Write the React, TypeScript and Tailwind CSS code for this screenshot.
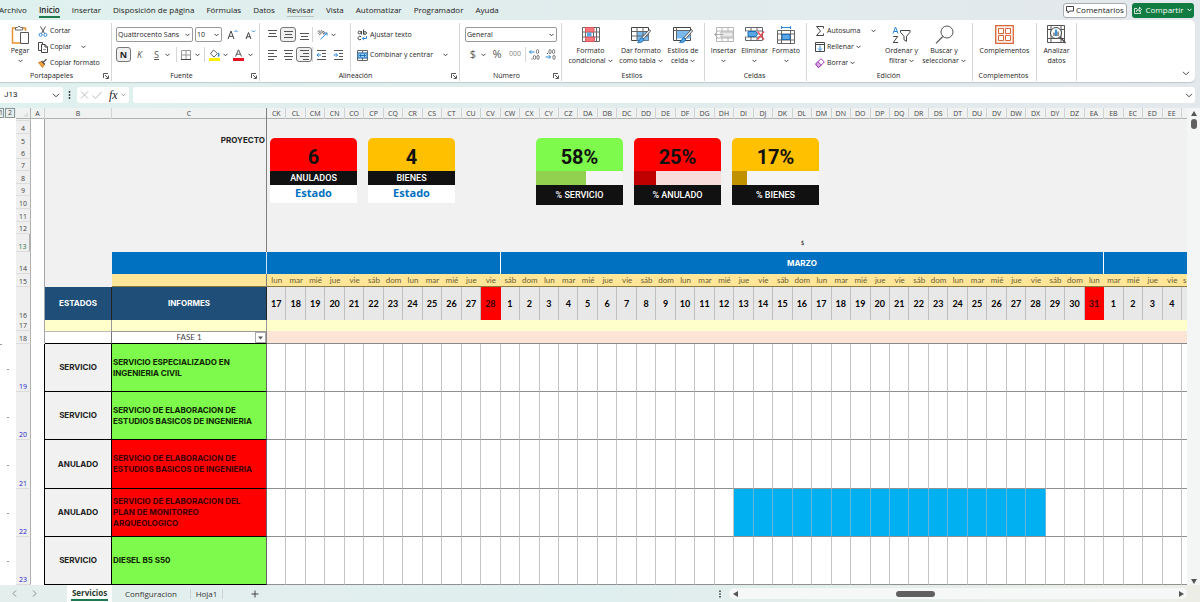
import React from "react";

const COLS =
  "grid grid-cols-[15px_14px_67px_155px_repeat(47,minmax(0,1fr))_5px]";

const WEEK = ["lun", "mar", "mié", "jue", "vie", "sáb", "dom"];

function columnName(index: number) {
  const first = String.fromCharCode(65 + Math.floor(index / 26) - 1);
  return first + String.fromCharCode(65 + (index % 26));
}

const DAYS = Array.from({ length: 47 }, (_, i) => ({
  column: columnName(88 + i),
  weekday: WEEK[i % 7],
  number: i < 12 ? 17 + i : i < 43 ? i - 11 : i - 42,
  monthEnd: i === 11 || i === 42,
}));

type Task = {
  row: number;
  state: string;
  name: string;
  cancelled?: boolean;
  from?: number;
  to?: number;
};

const TASKS: Task[] = [
  { row: 19, state: "SERVICIO", name: "SERVICIO ESPECIALIZADO EN INGENIERIA CIVIL" },
  { row: 20, state: "SERVICIO", name: "SERVICIO DE ELABORACION DE ESTUDIOS BASICOS DE INGENIERIA" },
  { row: 21, state: "ANULADO", name: "SERVICIO DE ELABORACION DE ESTUDIOS BASICOS DE INGENIERIA", cancelled: true },
  { row: 22, state: "ANULADO", name: "SERVICIO DE ELABORACION DEL PLAN DE MONITOREO ARQUEOLOGICO", cancelled: true, from: 24, to: 39 },
  { row: 23, state: "SERVICIO", name: "DIESEL B5 S50" },
];

/* ---------- icons ---------- */

type IconProps = { w?: number; h?: number; box?: string; className?: string; children: React.ReactNode };

function Icon({ w = 14, h = 14, box, className = "", children }: IconProps) {
  return (
    <svg
      width={w}
      height={h}
      viewBox={box ?? `0 0 ${w} ${h}`}
      fill="none"
      stroke="#444"
      strokeWidth="1"
      className={`shrink-0 ${className}`}
      aria-hidden="true"
    >
      {children}
    </svg>
  );
}

function Chevron({ className = "text-[#444]" }: { className?: string }) {
  return (
    <svg width="5" height="4" viewBox="0 0 5 4" fill="none" stroke="currentColor" strokeWidth="1" className={`inline-block shrink-0 ${className}`} aria-hidden="true">
      <path d="M0.5 0.8 2.5 2.8 4.5 0.8" />
    </svg>
  );
}

const WideChevron = () => (
  <Icon w={8} h={5}>
    <path d="M1 0.8 4 3.8 7 0.8" />
  </Icon>
);

const PasteIcon = () => (
  <Icon w={20} h={20}>
    <path d="M5 3H2.5v15H10M13 3h2.5v3" stroke="#e8912d" strokeWidth="1.5" />
    <path d="M5.500 5V2.500h2a1.700 1.700 0 0 1 3.200 0h2V5z" stroke="#666" fill="#fff" />
    <path d="M10.500 7.500h8v11h-8z" stroke="#555" fill="#fff" />
  </Icon>
);
const CutIcon = () => (
  <Icon w={10} h={11}>
    <path d="M2.500 0.500 6.500 7.500M7.500 0.500 3.500 7.500" stroke="#555" />
    <circle cx="2.600" cy="8.800" r="1.500" stroke="#2b88d8" />
    <circle cx="7.400" cy="8.800" r="1.500" stroke="#2b88d8" />
  </Icon>
);
const CopyIcon = () => (
  <Icon w={10} h={11}>
    <path d="M3.500 8.500h-3v-8h4v2" />
    <path d="M3.500 2.500h3.500l2.500 2.500v5.500h-6zM7 2.500v2.500h2.500" />
    <path d="M5 7.500h3" stroke="#999" />
  </Icon>
);
const BrushIcon = () => (
  <Icon w={10} h={10}>
    <path d="M0.500 4.500 4 3.500 6.500 6.500 4.500 9.500z" fill="#f2a33c" stroke="#d9822b" />
    <path d="M3.500 3 7 6.500M5 4.500 8.500 1" stroke="#555" strokeWidth="1.300" />
  </Icon>
);
const LauncherIcon = () => (
  <Icon w={6} h={6}>
    <path d="M0.500 5V0.500H5M2 2l3 3M5.500 2.500v3h-3" stroke="#555" />
  </Icon>
);
const BordersIcon = () => (
  <Icon w={10} h={10}>
    <path d="M0.500 0.500h9v9h-9zM5 0.500v9M0.500 5h9" stroke="#999" />
    <path d="M0 9.500h10" stroke="#444" />
  </Icon>
);
const BucketIcon = () => (
  <Icon w={11} h={12}>
    <path d="M4.500 1 8.500 4.500 5 8 1.500 4.800z" stroke="#666" />
    <path d="M9 4c1 1.200 1 2.500 0.300 3.500" stroke="#2b88d8" strokeWidth="1.500" />
    <path d="M0 10.500h11" stroke="#fff000" strokeWidth="3" />
  </Icon>
);
const FontColorIcon = () => (
  <Icon w={11} h={12}>
    <path d="M2.500 7.500 5.500 0.800 8.500 7.500M3.600 5.200h3.800" stroke="#555" />
    <path d="M0 10.500h11" stroke="#e81123" strokeWidth="3" />
  </Icon>
);

function Lines({ rows }: { rows: [number, number, number][] }) {
  return (
    <Icon w={11} h={11}>
      {rows.map(([x, y, len]) => (
        <path key={y} d={`M${x} ${y}h${len}`} stroke="#555" />
      ))}
    </Icon>
  );
}

const OrientationIcon = () => (
  <Icon w={11} h={11}>
    <path d="M0.800 3.200c0.200-1.500 2-1.700 2.600-0.600l1.200 1.700M2.800 3.300c-1.300 0.300-1.500 1.800-0.500 2.200s1.900-0.700 1.500-1.700M4 1l3 4.200M5.300 3c0.800-1 2.400-0.600 2.300 0.700s-1.200 1.500-1.700 1" stroke="#666" strokeWidth="0.900" />
    <path d="M3.500 10.200 10 4M7.500 4H10v2.500" stroke="#2b88d8" />
  </Icon>
);
const IndentIcon = ({ flip = false }: { flip?: boolean }) => (
  <Icon w={11} h={11}>
    <path d="M1 1.500h9M6 4.500h4M6 7.500h4M1 10.500h9" stroke="#555" />
    <path d={flip ? "M0.500 6h4M2.800 4.200 4.600 6 2.800 7.800" : "M1 6h4M2.800 4.200 1 6l1.800 1.800"} stroke="#2b88d8" />
  </Icon>
);
const WrapIcon = () => (
  <Icon w={11} h={12}>
    <circle cx="2.500" cy="3.500" r="1.400" />
    <path d="M4.500 2v3.500M6.500 0.500v5" />
    <circle cx="8" cy="4" r="1.400" />
    <path d="M4 7.500c-2-0.500-3 0.300-3 1.700s1.500 2 3 1.200" />
    <path d="M9.500 7v2.500H5.500M7 7.800 5.300 9.500 7 11.200" stroke="#2b88d8" />
  </Icon>
);
const MergeIcon = () => (
  <Icon w={11} h={11}>
    <path d="M0.500 0.500h10v10h-10zM0.500 3h10M0.500 8h10M5.500 0.500V3M5.500 8v2.500" stroke="#666" />
    <path d="M1 3.200h9v4.600H1z" fill="#9fd0f5" stroke="#2b88d8" />
    <path d="M2.500 5.500h6M4 4.200 2.500 5.500 4 6.800M7 4.200 8.500 5.500 7 6.800" stroke="#1b6fb8" />
  </Icon>
);
const DecimalIcon = ({ less = false }: { less?: boolean }) => (
  <Icon w={11} h={11}>
    <ellipse cx={less ? 5 : 8.500} cy="2.600" rx="1.200" ry="2" stroke="#777" />
    <ellipse cx={less ? 8.600 : 5.500} cy={less ? 2.600 : 8.400} rx="1.200" ry="2" stroke="#777" />
    <ellipse cx="9" cy="8.400" rx="1.200" ry="2" stroke="#777" />
    <path d={less ? "M0.500 8h5M3.800 6.200 5.600 8 3.800 9.800" : "M0.500 3h5M2.300 1.200 0.500 3l1.800 1.800"} stroke="#2b88d8" />
    <path d={less ? "M2 4.500h1" : "M2.500 10h1"} />
  </Icon>
);
const CondFormatIcon = () => (
  <Icon w={18} h={15}>
    <path d="M0.500 0.500h17v14h-17zM0.500 5h17M0.500 10h17M14.500 0.500v14" fill="#fff" stroke="#666" />
    <path d="M3.500 0.500h8.500v4.500h-8.500zM3.500 10h9v4.500h-9z" fill="#f4777d" stroke="#e0565d" />
    <path d="M5 5.500h4.500v4H5z" fill="#5aa7e8" stroke="none" />
    <path d="M3.500 5v5M11.500 5v5" stroke="#666" />
  </Icon>
);
const StyleBrush = () => (
  <>
    <path d="M18.500 3.500 11 11.500l1.500 1.500 7-8z" fill="#fff" stroke="#555" />
    <path d="M11 11.500c-2 0.500-2 3-4.500 5 3 0.500 6-0.500 6-3.500z" fill="#5aa7e8" stroke="#1b6fb8" />
  </>
);
const TableFormatIcon = () => (
  <Icon w={20} h={18}>
    <path d="M0.500 1.500h17v13h-17z" fill="#fff" />
    <path d="M6 5.500h11.500v9H6z" fill="#7ab8ee" stroke="none" />
    <path d="M0.500 5.500h17M0.500 10h17M6 1.500v13M12 1.500v13" stroke="#666" />
    <StyleBrush />
  </Icon>
);
const CellStyleIcon = () => (
  <Icon w={20} h={18}>
    <path d="M0.500 1.500h17v13h-17z" fill="#fff" />
    <path d="M3.500 4.500h14v8h-14z" fill="#7ab8ee" stroke="none" />
    <path d="M0.500 4.500h17M3.500 1.500v13" stroke="#666" />
    <StyleBrush />
  </Icon>
);
const InsertIcon = () => (
  <Icon w={20} h={15} className="opacity-60">
    <path d="M2.500 0.500h17v14h-17zM2.500 4h17M2.500 11h17M8 0.500v14M14 0.500v14" stroke="#888" />
    <path d="M7 5h12v5H7z" fill="#ddd" stroke="#888" />
    <path d="M0.500 7.500h9M3.500 4.500l-3 3 3 3" stroke="#777" />
  </Icon>
);
const DeleteIcon = () => (
  <Icon w={20} h={15}>
    <path d="M0.500 0.500h17v13h-17zM0.500 4h17M0.500 10h17M6 0.500v3.500M12 0.500v3.500M6 10v3.500M12 10v3.500" stroke="#666" />
    <path d="M0 4.500h13v5H0z" fill="#fff" stroke="none" />
    <path d="M3 4.500h8l1.500 2.500L11 9.500H3z" fill="#5aa7e8" stroke="#1b6fb8" />
    <path d="M12.500 4.500 19 12.500M19 4.500 12.500 12.500" stroke="#e8474f" strokeWidth="1.300" />
  </Icon>
);
const FormatIcon = () => (
  <Icon w={18} h={18}>
    <path d="M4.500 0v3M13.500 0v3M5 1.500h8" stroke="#2b88d8" />
    <path d="M0.500 4.500h17v13h-17zM0.500 8h17M0.500 14h17M4.500 4.500v13M13.500 4.500v13" stroke="#666" />
    <path d="M5 8.500h8v5H5z" fill="#5aa7e8" stroke="#1b6fb8" />
  </Icon>
);
const SigmaIcon = () => (
  <Icon w={10} h={10}>
    <path d="M8.500 2.500v-2h-7L5.500 5l-4 4.500h7v-2" />
  </Icon>
);
const FillIcon = () => (
  <Icon w={10} h={10}>
    <path d="M0.500 0.500h9v9h-9zM0.500 2.500h9" />
    <path d="M5 3.500v5M3 6.500l2 2 2-2" stroke="#2b88d8" />
  </Icon>
);
const EraserIcon = () => (
  <Icon w={10} h={10}>
    <path d="M0.700 6 6 0.700 9.300 4 4 9.300H3z" fill="#fff" stroke="#9b3fb0" />
    <path d="M0.700 6 3 3.700 6.300 7 4 9.300H3z" fill="#d9a7e2" stroke="#9b3fb0" />
  </Icon>
);
const SortIcon = () => (
  <Icon w={19} h={18}>
    <path d="M1 7.500 3.500 1 6 7.500M1.800 5.500h3.400" stroke="#2b88d8" />
    <path d="M1.200 10.500h4.500l-4.500 6h4.800" />
    <path d="M8.500 4.500h9.500v1.800l-3.500 4v5l-2.500-1.500v-3.500l-3.500-4z" />
  </Icon>
);
const SearchIcon = () => (
  <Icon w={19} h={19}>
    <circle cx="12" cy="7" r="6" stroke="#555" />
    <path d="M7.800 11.500 1 18.300" stroke="#555" strokeWidth="1.200" />
  </Icon>
);
const AddinsIcon = () => (
  <Icon w={19} h={19}>
    <path d="M0.700 0.700h17.600v17.600H0.700z" fill="#fdf1ec" stroke="#d9673a" strokeWidth="1.300" />
    <path d="M3.500 3.500h5v5h-5zM10.500 3.500h5v5h-5zM3.500 10.500h5v5h-5zM10.500 10.500h5v5h-5z" fill="#fff" stroke="#d9673a" />
  </Icon>
);
const AnalyzeIcon = () => (
  <Icon w={19} h={19}>
    <path d="M0.500 0.500h17v17h-17zM0.500 4.500h17M0.500 13.500h17M4 0.500v17M14 0.500v17" stroke="#555" />
    <circle cx="9" cy="8" r="5.500" fill="#fff" stroke="#444" />
    <path d="M7 11V7.500M11 11V6.500" stroke="#777" strokeWidth="1.500" />
    <path d="M9 11V4.500" stroke="#2b88d8" strokeWidth="1.800" />
    <path d="M13 12l5.500 6" stroke="#444" strokeWidth="1.300" />
  </Icon>
);

/* ---------- ribbon ---------- */

function Group({ label, launcher, className, children }: { label: string; launcher?: boolean; className: string; children: React.ReactNode }) {
  return (
    <section aria-label={label || "Analizar"} className={`flex shrink-0 flex-col pt-[3px] ${className}`}>
      <div className="flex h-[58px] flex-col border-r border-[#d6d8d8]">
        <div className="flex h-[48px] items-stretch">{children}</div>
        <div className="flex h-[10px] items-center pr-[2px] text-[7px] leading-[10px]">
          <span className="flex-1 text-center">{label}</span>
          {launcher && (
            <button type="button" aria-label={`Configurar ${label}`}>
              <LauncherIcon />
            </button>
          )}
        </div>
      </div>
    </section>
  );
}

function BigButton({ icon, lines, chevron, below, className }: { icon: React.ReactNode; lines: string[]; chevron?: boolean; below?: boolean; className: string }) {
  return (
    <button type="button" className={`flex shrink-0 flex-col items-center ${className}`}>
      <span className="flex h-[23px] items-center justify-center">{icon}</span>
      {lines.map((line, i) => (
        <span key={line} className="flex h-[10px] items-center gap-[2px] whitespace-nowrap leading-[10px]">
          {line}
          {chevron && i === lines.length - 1 && <Chevron />}
        </span>
      ))}
      {below && (
        <span className="flex h-[10px] items-center">
          <Chevron />
        </span>
      )}
    </button>
  );
}

function SmallButton({ icon, label, chevron }: { icon: React.ReactNode; label: string; chevron?: boolean }) {
  return (
    <button type="button" className="flex h-[16px] items-center gap-[2px] whitespace-nowrap">
      <span className="flex w-[11px] justify-center">{icon}</span>
      <span className={chevron ? "flex items-center gap-[2px]" : ""}>
        {label}
        {chevron && <Chevron />}
      </span>
    </button>
  );
}

function Tool({ label, selected, className = "w-[16px]", children }: { label: string; selected?: boolean; className?: string; children: React.ReactNode }) {
  return (
    <button
      type="button"
      aria-label={label}
      aria-pressed={selected ? true : undefined}
      className={`flex h-[15px] shrink-0 items-center justify-center ${className} ${selected ? "rounded-[3px] border border-[#777] bg-[#f0f0f0]" : ""}`}
    >
      {children}
    </button>
  );
}

const Divider = () => <span className="h-[15px] w-px shrink-0 bg-[#d6d8d8]" />;

function Combo({ label, value, className }: { label: string; value: string; className: string }) {
  return (
    <div className={`relative flex h-[15px] shrink-0 items-center rounded-[2px] border border-[#999] bg-white ${className}`}>
      <select aria-label={label} className="h-[13px] w-full appearance-none bg-transparent pl-[1px] leading-[13px] outline-none" defaultValue={value}>
        <option>{value}</option>
      </select>
      <span className="pointer-events-none absolute right-[2px] flex">
        <Chevron />
      </span>
    </div>
  );
}

const TABS = ["Archivo", "Inicio", "Insertar", "Disposición de página", "Fórmulas", "Datos", "Revisar", "Vista", "Automatizar", "Programador", "Ayuda"];

function TabBar() {
  return (
    <header className="flex h-[20px] items-center justify-between pr-[6px] text-[8px]">
      <nav className="-ml-px flex h-full gap-[12px]">
        {TABS.map((tab) => (
          <a
            key={tab}
            href={`#${tab}`}
            className={
              tab === "Inicio"
                ? "mt-[4px] h-[14px] whitespace-nowrap border-b-2 border-[#1d7a4c] font-semibold leading-[12px]"
                : tab === "Revisar"
                  ? "mt-[4px] h-[13px] whitespace-nowrap border-b border-[#b8c0c0] leading-[12px]"
                  : "mt-[4px] whitespace-nowrap leading-[12px]"
            }
          >
            {tab}
          </a>
        ))}
      </nav>
      <div className="flex shrink-0 gap-[5px]">
        <button type="button" className="flex h-[15px] w-[64px] items-center justify-center gap-[2px] rounded-[3px] border border-[#a8adad] bg-white">
          <Icon w={8} h={8}>
            <path d="M0.500 0.500h7v4.500h-4l-1.500 2v-2h-1.500z" />
          </Icon>
          Comentarios
        </button>
        <button type="button" className="flex h-[15px] w-[62px] items-center justify-center gap-[3px] rounded-[3px] bg-[#107c41] text-white">
          <Icon w={8} h={8}>
            <path d="M3 2.500h-2.500v5h6v-2M2.500 5.500c0-2 1.500-2.500 3-2.500V1l2 2.500-2 2v-1.300c-1.500 0-2.500 0.300-3 1.300z" stroke="#fff" strokeWidth="0.800" />
          </Icon>
          <span className="font-medium">Compartir</span>
          <Chevron className="text-white" />
        </button>
      </div>
    </header>
  );
}

function Ribbon() {
  return (
    <div className="mr-[5px] flex h-[62px] overflow-hidden rounded-r-[5px] bg-white text-[7px] text-[#262626] shadow-[0_1px_1px_rgba(0,0,0,0.15)]">
      <Group label="Portapapeles" launcher className="w-[112px]">
        <BigButton icon={<PasteIcon />} lines={["Pegar"]} below className="w-[37px] pl-[3px]" />
        <div className="flex flex-col">
          <SmallButton icon={<CutIcon />} label="Cortar" />
          <div className="flex items-center gap-[10px]">
            <SmallButton icon={<CopyIcon />} label="Copiar" />
            <Chevron />
          </div>
          <SmallButton icon={<BrushIcon />} label="Copiar formato" />
        </div>
      </Group>

      <Group label="Fuente" launcher className="w-[148px]">
        <div className="flex flex-col gap-[5px] pl-[4px] pt-[4px]">
          <div className="flex items-center gap-[2px]">
            <Combo label="Fuente" value="Quattrocento Sans" className="w-[77px]" />
            <Combo label="Tamaño de fuente" value="10" className="w-[27px]" />
            <Tool label="Aumentar tamaño" className="w-[16px]">
              <Icon w={11} h={11}>
                <path d="M1 10 4 2l3 8M2 7.300h4" stroke="#444" />
                <path d="M7.500 3 9 1.500 10.500 3" stroke="#2b88d8" />
              </Icon>
            </Tool>
            <Tool label="Disminuir tamaño" className="w-[16px]">
              <Icon w={11} h={11}>
                <path d="M1 10 3.500 3.500 6 10M2 7.800h3.200" stroke="#444" />
                <path d="M7 1.500 8.500 3 10 1.500" stroke="#2b88d8" />
              </Icon>
            </Tool>
          </div>
          <div className="flex items-center text-[9px]">
            <Tool label="Negrita" selected className="w-[15px] font-bold">N</Tool>
            <Tool label="Cursiva" className="w-[17px] italic text-[#555]">K</Tool>
            <Tool label="Subrayado" className="w-[17px] text-[#555] underline">S</Tool>
            <Chevron />
            <span className="w-[6px]" />
            <Divider />
            <Tool label="Bordes" className="w-[18px]"><BordersIcon /></Tool>
            <Chevron />
            <span className="w-[4px]" />
            <Divider />
            <Tool label="Color de relleno" className="w-[18px]"><BucketIcon /></Tool>
            <Chevron />
            <Tool label="Color de fuente" className="w-[20px]"><FontColorIcon /></Tool>
            <Chevron />
          </div>
        </div>
      </Group>

      <Group label="Alineación" launcher className="w-[200px]">
        <div className="flex w-[91px] flex-col gap-[5px] border-r border-[#d6d8d8] pl-[4px] pt-[4px]">
          <div className="flex items-center">
            <Tool label="Alinear arriba"><Lines rows={[[1, 1.5, 9], [2, 4.5, 7], [1, 7.5, 9]]} /></Tool>
            <Tool label="Alinear al medio" selected><Lines rows={[[1, 2.5, 9], [2, 5.5, 7], [1, 8.5, 9]]} /></Tool>
            <Tool label="Alinear abajo"><Lines rows={[[1, 4.5, 9], [2, 7.5, 7], [1, 10.5, 9]]} /></Tool>
            <Divider />
            <Tool label="Orientación" className="w-[18px]"><OrientationIcon /></Tool>
            <Chevron />
          </div>
          <div className="flex items-center">
            <Tool label="Alinear a la izquierda"><Lines rows={[[1, 1.5, 9], [1, 4.5, 6], [1, 7.5, 9], [1, 10.5, 6]]} /></Tool>
            <Tool label="Centrar"><Lines rows={[[1, 1.5, 9], [2, 4.5, 7], [1, 7.5, 9], [2, 10.5, 7]]} /></Tool>
            <Tool label="Alinear a la derecha" selected><Lines rows={[[1, 1.5, 9], [4, 4.5, 6], [1, 7.5, 9], [4, 10.5, 6]]} /></Tool>
            <Divider />
            <Tool label="Disminuir sangría" className="w-[17px]"><IndentIcon /></Tool>
            <Tool label="Aumentar sangría" className="w-[17px]"><IndentIcon flip /></Tool>
          </div>
        </div>
        <div className="flex flex-col gap-[4px] pl-[6px] pt-[4px]">
          <SmallButton icon={<WrapIcon />} label="Ajustar texto" />
          <div className="flex items-center gap-[10px]">
            <SmallButton icon={<MergeIcon />} label="Combinar y centrar" />
            <Chevron />
          </div>
        </div>
      </Group>

      <Group label="Número" launcher className="w-[102px]">
        <div className="flex flex-col gap-[5px] pl-[5px] pt-[4px]">
          <Combo label="Formato de número" value="General" className="w-[92px]" />
          <div className="flex items-center text-[11px] text-[#555]">
            <Tool label="Formato de contabilidad" className="w-[16px]">$</Tool>
            <Chevron />
            <Tool label="Estilo porcentual" className="w-[22px]">%</Tool>
            <Tool label="Estilo millares" className="w-[14px] text-[7px] text-[#888]">000</Tool>
            <span className="w-[3px]" />
            <Divider />
            <Tool label="Aumentar decimales" className="w-[16px]"><DecimalIcon /></Tool>
            <Tool label="Disminuir decimales" className="w-[16px]"><DecimalIcon less /></Tool>
          </div>
        </div>
      </Group>

      <Group label="Estilos" className="w-[143px]">
        <BigButton icon={<CondFormatIcon />} lines={["Formato", "condicional"]} chevron className="w-[57px]" />
        <BigButton icon={<TableFormatIcon />} lines={["Dar formato", "como tabla"]} chevron className="w-[44px]" />
        <BigButton icon={<CellStyleIcon />} lines={["Estilos de", "celda"]} chevron className="w-[40px]" />
      </Group>

      <Group label="Celdas" className="w-[102px]">
        <BigButton icon={<InsertIcon />} lines={["Insertar"]} below className="w-[37px]" />
        <BigButton icon={<DeleteIcon />} lines={["Eliminar"]} below className="w-[25px]" />
        <BigButton icon={<FormatIcon />} lines={["Formato"]} below className="w-[38px]" />
      </Group>

      <Group label="Edición" className="w-[166px]">
        <div className="flex w-[70px] flex-col pl-[7px]">
          <div className="flex items-center gap-[11px]">
            <SmallButton icon={<SigmaIcon />} label="Autosuma" />
            <Chevron />
          </div>
          <SmallButton icon={<FillIcon />} label="Rellenar" chevron />
          <SmallButton icon={<EraserIcon />} label="Borrar" chevron />
        </div>
        <BigButton icon={<SortIcon />} lines={["Ordenar y", "filtrar"]} chevron className="w-[49px]" />
        <BigButton icon={<SearchIcon />} lines={["Buscar y", "seleccionar"]} chevron className="w-[36px]" />
      </Group>

      <Group label="Complementos" className="w-[64px]">
        <BigButton icon={<AddinsIcon />} lines={["Complementos"]} className="w-[63px]" />
      </Group>

      <Group label="" className="w-[40px]">
        <BigButton icon={<AnalyzeIcon />} lines={["Analizar", "datos"]} className="w-[39px]" />
      </Group>

      <div className="flex flex-1 items-end justify-end pb-[6px] pr-[5px]">
        <button type="button" aria-label="Contraer la cinta">
          <WideChevron />
        </button>
      </div>
    </div>
  );
}

function FormulaBar() {
  return (
    <div className="flex h-[26px] items-center pr-[5px] text-[8px]">
      <div className="flex h-[16px] w-[63px] shrink-0 items-center rounded-r-[3px] bg-white pl-[4px] pr-[3px]">
        <input aria-label="Cuadro de nombres" className="w-full min-w-0 bg-transparent font-['Roboto',sans-serif] outline-none" defaultValue="J13" />
        <WideChevron />
      </div>
      <Icon w={14} h={10}>
        <path d="M6.500 1v2M6.500 4v2M6.500 7v2" stroke="#444" strokeWidth="1.500" />
      </Icon>
      <div className="flex h-[16px] w-[52px] shrink-0 items-center justify-between rounded-[3px] bg-white px-[3px]">
        <button type="button" aria-label="Cancelar">
          <Icon w={9} h={8}><path d="M1 0.500 8 7.500M8 0.500 1 7.500" stroke="#bbb" /></Icon>
        </button>
        <button type="button" aria-label="Introducir">
          <Icon w={10} h={8}><path d="M0.500 4.500 3.500 7.500 9.500 0.800" stroke="#bbb" /></Icon>
        </button>
        <button type="button" aria-label="Insertar función" className="pl-[3px] font-['Liberation_Serif',serif] text-[12px] italic leading-[14px]">
          fx
        </button>
        <Chevron className="text-[#999]" />
      </div>
      <div className="ml-[4px] flex h-[16px] flex-1 items-center rounded-[3px] bg-white pl-[4px] pr-[2px]">
        <input aria-label="Barra de fórmulas" className="min-w-0 flex-1 bg-transparent outline-none" />
        <WideChevron />
      </div>
    </div>
  );
}

/* ---------- sheet ---------- */

function RowHead({ n, className = "text-[#444]" }: { n: React.ReactNode; className?: string }) {
  return (
    <th scope="row" className={`flex items-end justify-center border-b border-r border-b-[#dcdcdc] border-r-[#b0b0b0] bg-[#efefef] font-['Open_Sans',sans-serif] text-[7px] font-normal leading-[9px] ${className}`}>
      {n}
    </th>
  );
}

const HEAD_CELL = "border-r border-[#cfd3d3] text-center font-normal leading-[11px]";
const GREY = "bg-[#f1f1f1]";

function BlankRow({ n, className, children, head }: { n: React.ReactNode; className: string; children?: React.ReactNode; head?: string }) {
  return (
    <tr className={`${COLS} ${className}`}>
      <RowHead n={n} className={head} />
      <td className="border-r border-[#a6a6a6] bg-white" />
      <td className={GREY} />
      {children}
    </tr>
  );
}

const CARD_NUMBER = "h-[33px] rounded-t-[5px] pt-[3px] font-['Roboto',sans-serif] text-[20px] font-bold leading-[32px] text-[#111]";
const CARD_LABEL = "bg-[#111] font-['Roboto',sans-serif] text-[9px] font-medium text-white";

function CountCard({ value, label, color }: { value: number; label: string; color: string }) {
  return (
    <div className="w-[87px] text-center">
      <div className={`${CARD_NUMBER} ${color}`}>{value}</div>
      <div className={`h-[14px] leading-[15px] ${CARD_LABEL}`}>{label}</div>
      <div className="h-[18px] bg-white font-['Open_Sans',sans-serif] text-[11px] font-bold leading-[16px] text-[#0070c0]">Estado</div>
    </div>
  );
}

function PercentCard({ value, label, color, bar, track }: { value: number; label: string; color: string; bar: string; track: string }) {
  return (
    <div className="w-[87px] text-center">
      <div className={`${CARD_NUMBER} ${color}`}>{value}%</div>
      <div className={`h-[14px] ${track}`}>
        <div className={`h-full ${bar}`} style={{ width: `${value}%` }} />
      </div>
      <div className={`h-[20px] leading-[21px] ${CARD_LABEL}`}>% {label}</div>
    </div>
  );
}

const LABEL_FONT = "font-['Inter',sans-serif] text-[8px] font-bold";

function Sheet() {
  return (
    <div className="relative flex min-w-0 flex-1 flex-col bg-white">
      <table className="flex flex-1 flex-col font-['Lato',sans-serif]">
        <thead className="block">
          <tr className={`${COLS} h-[11px] border-b border-[#b0b0b0] bg-[#f0f2f2] font-['Open_Sans',sans-serif] text-[7px] text-[#444]`}>
            <th aria-label="Seleccionar todo" className="flex items-end justify-end border-r border-[#b0b0b0] pb-[2px] pr-[2px]">
              <Icon w={5} h={5}><path d="M5 0v5H0z" fill="#ddd" stroke="none" /></Icon>
            </th>
            <th className={HEAD_CELL}>A</th>
            <th className={HEAD_CELL}>B</th>
            <th className="border-r border-[#808080] text-center font-normal leading-[11px]">C</th>
            {DAYS.map((d) => (
              <th key={d.column} className={HEAD_CELL}>{d.column}</th>
            ))}
            <th aria-label="EF" />
          </tr>
        </thead>

        <tbody className="flex h-[115px] flex-col">
          <BlankRow n="" className="h-[2px]">
            <td className={`border-r border-[#808080] ${GREY}`} />
            <td className={`col-span-48 ${GREY}`} />
          </BlankRow>
          {[4, 5, 6, 7, 8, 9, 10, 11, 12].map((n) => (
            <BlankRow key={n} n={n} className="min-h-0 flex-1">
              <td className={`border-r border-[#808080] pr-px text-right leading-[13px] ${LABEL_FONT} ${GREY}`}>{n === 5 ? "PROYECTO" : ""}</td>
              <td className={`col-span-48 ${GREY}`} />
            </BlankRow>
          ))}
        </tbody>

        <tbody className="block">
          <BlankRow n={13} className="h-[18px]" head="border-r-2 border-r-[#217346] bg-[#e0e6e3] text-[#217346]">
            <td className={`border-r border-[#808080] ${GREY}`} />
            <td className={`col-span-12 ${GREY}`} />
            <td className={`col-span-31 text-center text-[6px] leading-[18px] ${GREY}`}>$</td>
            <td className={`col-span-5 ${GREY}`} />
          </BlankRow>
          <BlankRow n={14} className="h-[22px]">
            <td className="border-r border-r-[#cfe3f3] bg-[#0070c0]" />
            <td className="col-span-12 border-r border-white bg-[#0070c0]" />
            <td className={`col-span-31 border-r border-white bg-[#0070c0] text-center leading-[22px] text-white ${LABEL_FONT}`}>MARZO</td>
            <td className="col-span-5 bg-[#0070c0]" />
          </BlankRow>
          <BlankRow n={15} className="h-[13px] text-[8px] leading-[12px] text-[#6b5d33]">
            <td className="border-b border-r border-b-[#8a7a40] border-r-[#808080] bg-[#ffe699]" />
            {DAYS.map((d) => (
              <td key={d.column} className="border-b border-[#8a7a40] bg-[#ffe699] text-center">{d.weekday}</td>
            ))}
            <td className="border-b border-[#8a7a40] bg-[#ffe699] pl-px">s</td>
          </BlankRow>
          <tr className={`${COLS} h-[33px] text-[9px] font-bold leading-[33px]`}>
            <RowHead n={16} />
            <td className="border-r border-[#a6a6a6]" />
            <th className={`border-r border-[#222] bg-[#1f4e78] text-center text-white ${LABEL_FONT}`}>ESTADOS</th>
            <th className={`border-r border-[#222] bg-[#1f4e78] text-center text-white ${LABEL_FONT}`}>INFORMES</th>
            {DAYS.map((d) => (
              <th
                key={d.column}
                className={`border-b border-r border-b-[#888] text-center ${d.monthEnd ? "border-r-[#ff0000] bg-[#ff0000] text-[#3a0000]" : "border-r-[#bfbfbf] bg-[#e8e8e8] text-black"}`}
              >
                {d.number}
              </th>
            ))}
            <td className="border-b border-[#888] bg-[#e8e8e8]" />
          </tr>
          <tr className={`${COLS} h-[11px]`}>
            <RowHead n={17} />
            <td className="border-r border-[#a6a6a6]" />
            <td className="border-r border-[#999] bg-[#ffffcc]" />
            <td className="border-r border-[#999] bg-[#ffffcc]" />
            <td className="col-span-48 bg-[#ffffcc]" />
          </tr>
          <tr className={`${COLS} h-[13px]`}>
            <RowHead n={18} />
            <td className="border-b border-r border-b-white border-r-[#a6a6a6]" />
            <td className="border-b border-r border-t border-b-black border-r-[#777] border-t-[#bbb]" />
            <td className="relative border-b border-r border-t border-b-black border-r-[#808080] border-t-[#999] text-center text-[8px] leading-[11px] text-[#444]">
              FASE 1
              <button type="button" aria-label="Filtrar" className="absolute bottom-0 right-0 flex h-[11px] w-[11px] items-center justify-center border border-[#aaa] bg-white">
                <Icon w={5} h={4}><path d="M0 0.500h5L2.500 3.500z" fill="#555" stroke="none" /></Icon>
              </button>
            </td>
            <td className="col-span-48 border-b border-[#888] bg-[#fce4d6]" />
          </tr>
        </tbody>

        <tbody className="flex flex-1 flex-col">
          {TASKS.map((t) => (
            <tr key={t.row} className={`${COLS} min-h-[48px] flex-1 leading-[11px]`}>
              <RowHead n={t.row} className="text-[#2222cc]" />
              <td className="border-r border-black" />
              <td className={`flex items-center justify-center border-b border-r border-black bg-[#f1f1f1] ${LABEL_FONT}`}>
                <span className="leading-[11px]">{t.state}</span>
              </td>
              <td className={`flex items-center border-b border-r border-b-black border-r-[#666] pl-px pr-[8px] ${LABEL_FONT} ${t.cancelled ? "bg-[#ff0000] text-[#3a0000]" : "bg-[#7dfa4b] text-[#0c2400]"}`}>
                <span className="leading-[11px]">{t.name}</span>
              </td>
              {DAYS.map((d, i) => {
                const filled = t.from !== undefined && t.to !== undefined && i >= t.from && i <= t.to;
                return (
                  <td
                    key={d.column}
                    className={`border-b border-r border-b-[#909090] ${filled ? "border-r-[#66b5dc] bg-[#00b0f0]" : "border-r-[#c4c4c4]"}`}
                  />
                );
              })}
              <td className="border-b border-[#909090]" />
            </tr>
          ))}
        </tbody>
      </table>

      <div className="absolute left-[254px] top-[30px] flex gap-[81px]">
        <div className="flex gap-[11px]">
          <CountCard value={6} label="ANULADOS" color="bg-[#ff0000]" />
          <CountCard value={4} label="BIENES" color="bg-[#ffc000]" />
        </div>
        <div className="flex gap-[11px]">
          <PercentCard value={58} label="SERVICIO" color="bg-[#7dfa4b]" bar="bg-[#92d050]" track="bg-[#f4f4f4]" />
          <PercentCard value={25} label="ANULADO" color="bg-[#ff0000]" bar="bg-[#c00000]" track="bg-[#f8dcdc]" />
          <PercentCard value={17} label="BIENES" color="bg-[#ffc000]" bar="bg-[#bf9000]" track="bg-[#f4f4f4]" />
        </div>
      </div>
    </div>
  );
}

function OutlineStrip() {
  return (
    <div className="flex w-[16px] shrink-0 flex-col bg-white text-[7px] text-[#444]">
      <div className="flex h-[10px] gap-px bg-[#e3ecec] pr-[1px]">
        <button type="button" className="flex w-[4px] justify-end border border-l-0 border-[#8a9494] bg-[#e8eeee] leading-[8px]">1</button>
        <button type="button" className="w-[10px] border border-[#8a9494] bg-[#e8eeee] leading-[8px]">2</button>
      </div>
      <div className="h-[226px]" />
      <div className="h-[2px]"><div className="h-px w-[2px] bg-[#999]" /></div>
      <div className="flex flex-1 flex-col">
        {TASKS.map((t) => (
          <div key={t.row} className="flex flex-1 items-center justify-center">
            <span className="h-px w-[2px] bg-[#999]" />
          </div>
        ))}
      </div>
    </div>
  );
}

function VerticalScroll() {
  return (
    <div className="flex w-[13px] shrink-0 flex-col items-center bg-[#f4f6f6] pb-px pt-[3px]">
      <Icon w={6} h={5}><path d="M3 0 6 5H0z" fill="#555" stroke="none" /></Icon>
      <div className="mt-[3px] h-[10px] w-[6px] rounded-[3px] bg-[#606060]" />
      <div className="flex-1" />
      <Icon w={6} h={5}><path d="M0 0h6L3 5z" fill="#555" stroke="none" /></Icon>
    </div>
  );
}

function SheetTabs() {
  return (
    <footer className="flex h-[17px] shrink-0 items-center bg-gradient-to-r from-[#e4efed] via-[#dfeeee] to-[#eceee6] text-[8px] text-[#333]">
      <div className="flex w-[67px] shrink-0 items-center gap-[15px] pl-[12px]">
        <button type="button" aria-label="Hoja anterior">
          <Icon w={5} h={7}><path d="M4 0.500 1 3.500 4 6.500" stroke="#888" /></Icon>
        </button>
        <button type="button" aria-label="Hoja siguiente">
          <Icon w={5} h={7}><path d="M1 0.500 4 3.500 1 6.500" stroke="#888" /></Icon>
        </button>
      </div>
      <button type="button" className="h-full w-[45px] shrink-0 bg-white px-[4px] font-bold text-[#1f3b2d]">
        <span className="flex h-[15px] items-center justify-center border-b-2 border-[#1d7a4c]">Servicios</span>
      </button>
      <button type="button" className="h-[10px] w-[79px] shrink-0 border-r border-[#ccd4d4] leading-[10px]">Configuracion</button>
      <button type="button" className="h-[10px] w-[32px] shrink-0 border-r border-[#ccd4d4] leading-[10px]">Hoja1</button>
      <button type="button" aria-label="Hoja nueva" className="ml-[28px]">
        <Icon w={8} h={8}><path d="M4 0.500v7M0.500 4h7" /></Icon>
      </button>
      <div className="flex-1" />
      <Icon w={4} h={8}><path d="M2 0.500v1.500M2 3.300v1.500M2 6v1.500" stroke="#333" strokeWidth="1.500" /></Icon>
      <div className="ml-[7px] mr-[13px] flex h-[11px] w-[458px] items-center rounded-[5px] bg-[#f5f8f7] pl-[4px] pr-[3px]">
        <Icon w={5} h={6}><path d="M5 0v6L0 3z" fill="#555" stroke="none" /></Icon>
        <span className="flex-1" />
        <span className="mr-[244px] h-[6px] w-[39px] rounded-[3px] bg-[#606060]" />
        <Icon w={5} h={6}><path d="M0 0v6l5-3z" fill="#555" stroke="none" /></Icon>
      </div>
    </footer>
  );
}

export default function App() {
  return (
    <div className="flex min-h-screen flex-col overflow-hidden bg-gradient-to-r from-[#dff1ee] to-[#e3e8ec] font-['Open_Sans','Noto_Sans',sans-serif] text-[#222]">
      <TabBar />
      <Ribbon />
      <FormulaBar />
      <main className="flex flex-1 items-stretch">
        <OutlineStrip />
        <Sheet />
        <VerticalScroll />
      </main>
      <SheetTabs />
    </div>
  );
}
